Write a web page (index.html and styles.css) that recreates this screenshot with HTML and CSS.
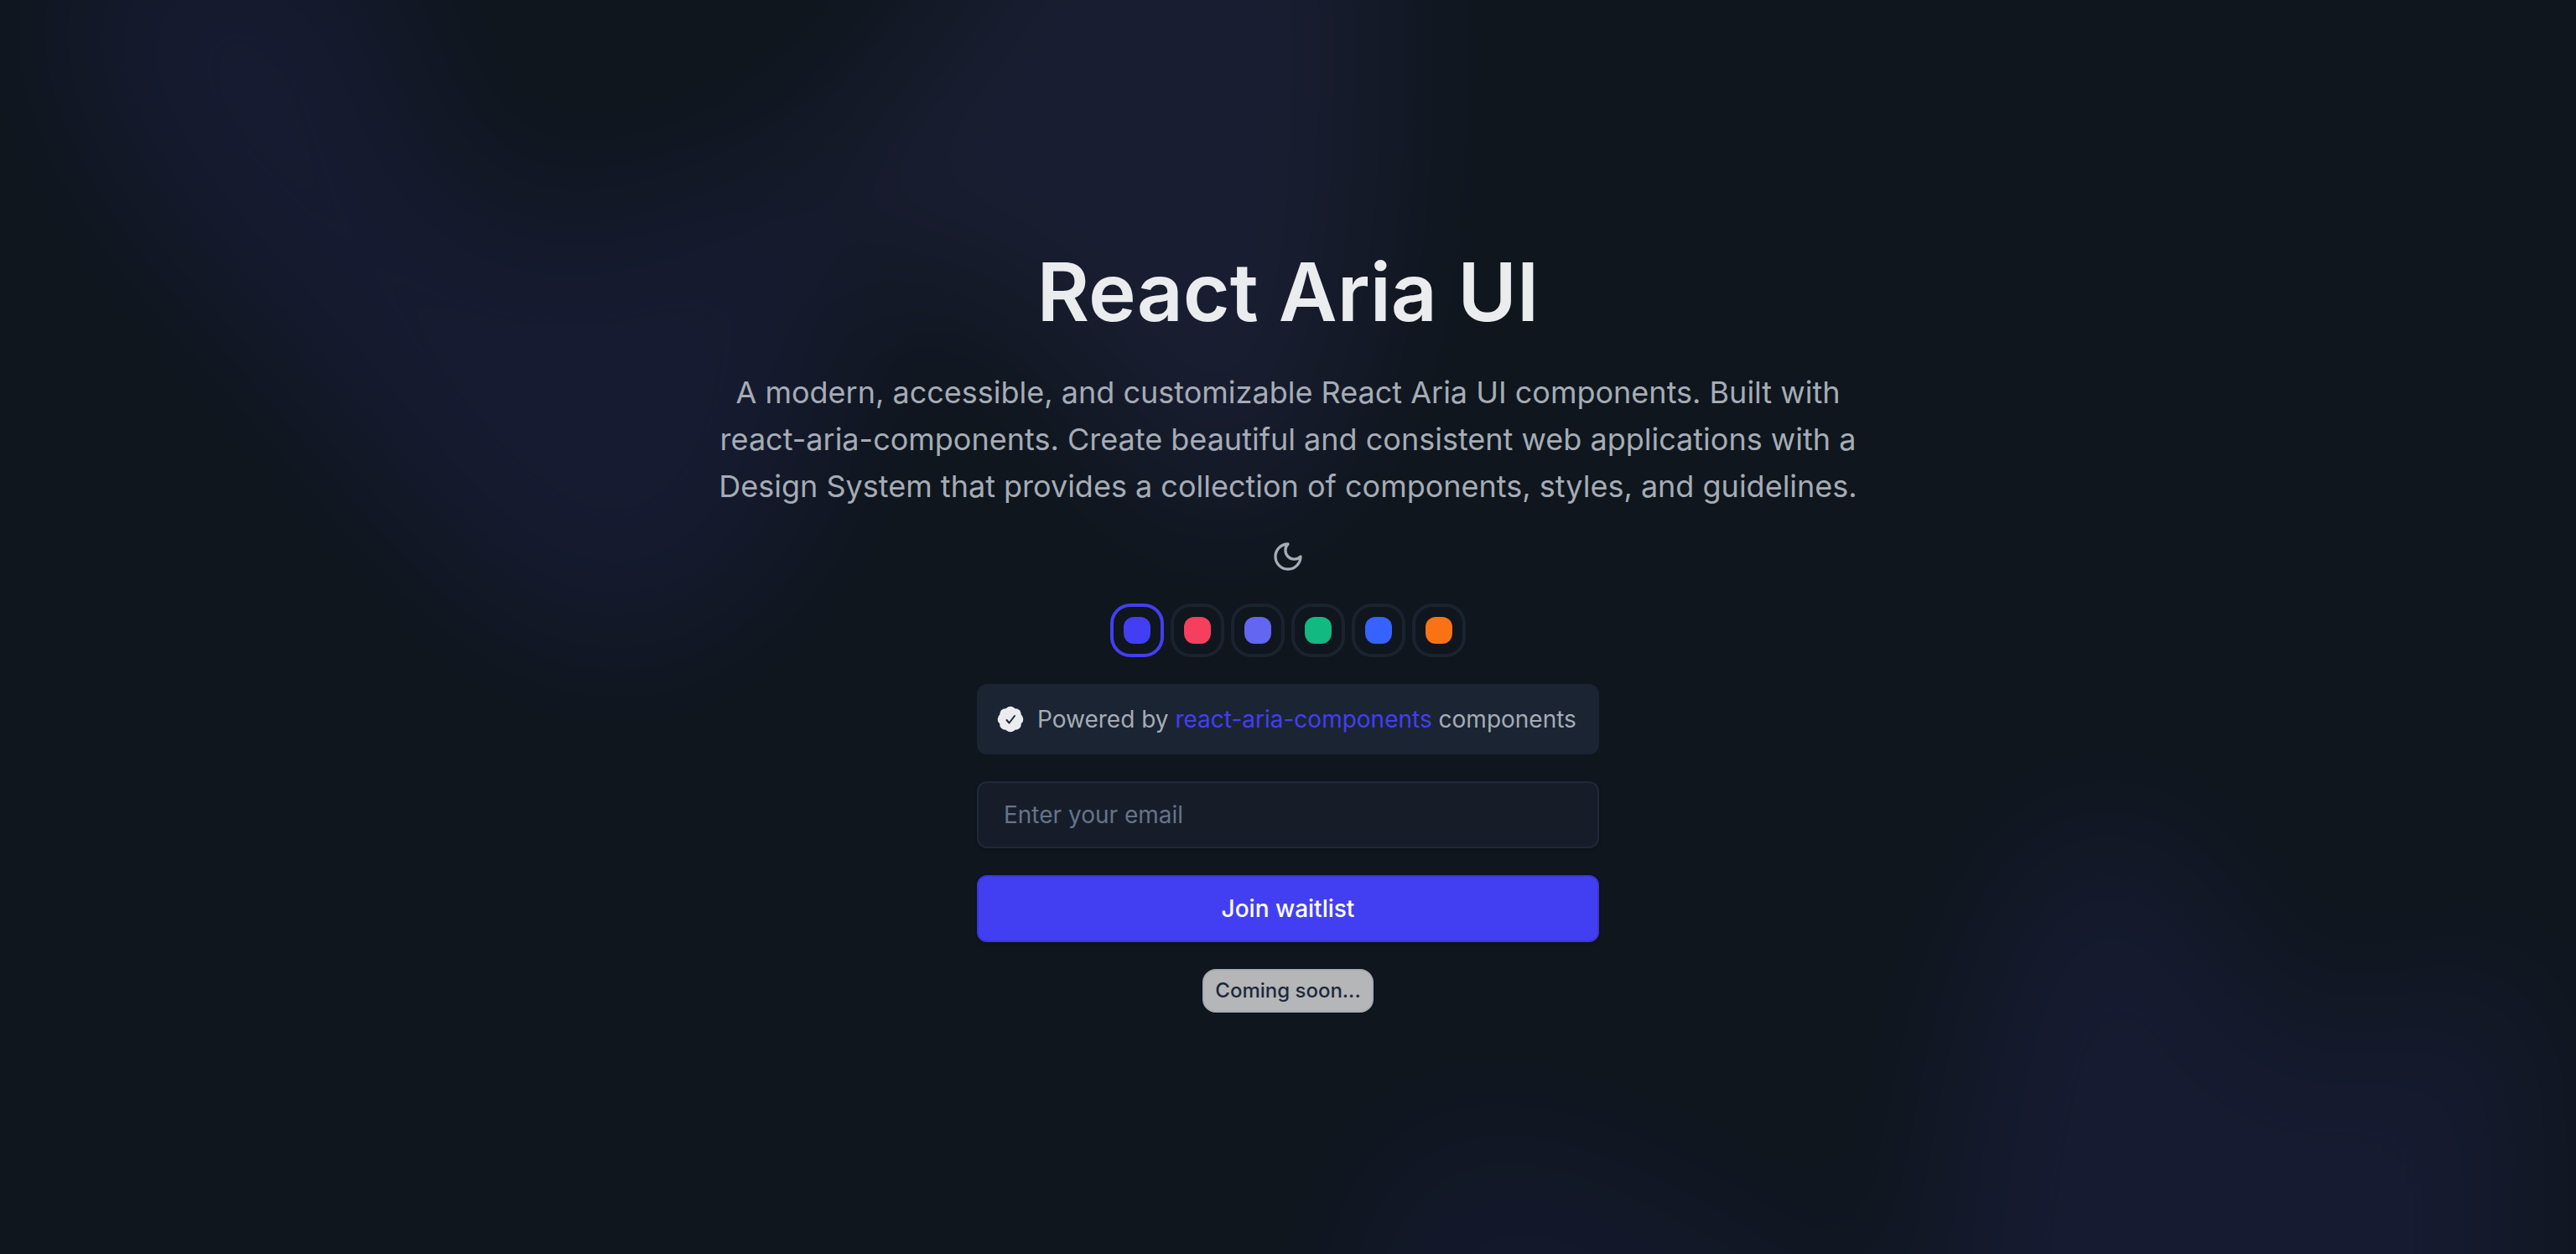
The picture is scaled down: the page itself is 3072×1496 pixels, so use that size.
FILE: index.html
```html
<!DOCTYPE html>
<html lang="en">
<head>
  <meta charset="utf-8">
  <meta name="viewport" content="width=device-width, initial-scale=1">
  <title>React Aria UI</title>
  <link rel="stylesheet" href="styles.css">
</head>
<body>
  <svg class="backdrop" viewBox="0 0 3072 1496" preserveAspectRatio="xMidYMid slice" aria-hidden="true">
    <defs>
      <filter id="soft" filterUnits="userSpaceOnUse" x="-600" y="-600" width="4272" height="2696" color-interpolation-filters="sRGB">
        <feGaussianBlur stdDeviation="90"/>
      </filter>
    </defs>
    <g class="glow">
      <g filter="url(#soft)">
        <path class="blob" d="M90 -60 C200 -140 400 -120 460 -20 C480 180 560 330 760 250 C880 200 900 200 1000 200 L990 480 C960 640 860 770 720 770 C560 730 460 560 340 420 C220 300 60 140 90 -60Z"/>
        <path class="blob-warm" d="M1240 -200 L1640 -200 C1660 160 1650 400 1570 540 C1500 660 1400 640 1300 470 C1220 340 1080 290 960 320 C900 180 1120 80 1240 -200Z"/>
        <path class="blob" d="M2300 1800 C2300 1350 2380 980 2510 980 C2650 990 2660 1270 2780 1250 C2860 1230 2920 1160 3010 1150 L3010 1800Z"/>
        <path class="blob-faint" d="M1620 1800 C1600 1440 1640 1350 1760 1350 C1900 1360 1980 1430 2120 1490 L2400 1800Z"/>
      </g>
    </g>
  </svg>

  <main class="hero">
    <h1 class="title">React Aria UI</h1>
    <p class="lead">A modern, accessible, and customizable React Aria UI components. Built with react-aria-components. Create beautiful and consistent web applications with a Design System that provides a collection of components, styles, and guidelines.</p>

    <button class="theme-toggle" type="button" aria-label="Toggle theme">
      <svg class="moon" viewBox="0 0 24 24" aria-hidden="true">
        <path d="M12 3a6 6 0 0 0 9 9 9 9 0 1 1-9-9Z"/>
      </svg>
    </button>

    <div class="swatches" role="radiogroup" aria-label="Accent color">
      <label class="swatch indigo"><input type="radio" name="accent" aria-label="Indigo" checked></label>
      <label class="swatch rose"><input type="radio" name="accent" aria-label="Rose"></label>
      <label class="swatch violet"><input type="radio" name="accent" aria-label="Violet"></label>
      <label class="swatch emerald"><input type="radio" name="accent" aria-label="Emerald"></label>
      <label class="swatch blue"><input type="radio" name="accent" aria-label="Blue"></label>
      <label class="swatch orange"><input type="radio" name="accent" aria-label="Orange"></label>
    </div>

    <form class="waitlist">
      <div class="notice">
        <svg class="badge-check" viewBox="0 0 32 32" aria-hidden="true">
          <g class="seal">
            <circle cx="16" cy="16" r="13"/>
            <circle cx="16" cy="7.500" r="6.800"/>
            <circle cx="22" cy="10" r="6.800"/>
            <circle cx="24.500" cy="16" r="6.800"/>
            <circle cx="22" cy="22" r="6.800"/>
            <circle cx="16" cy="24.500" r="6.800"/>
            <circle cx="10" cy="22" r="6.800"/>
            <circle cx="7.500" cy="16" r="6.800"/>
            <circle cx="10" cy="10" r="6.800"/>
          </g>
          <path class="tick" d="M11.500 17 14.500 20.500 21 12"/>
        </svg>
        <span>Powered by <a class="link" href="#">react-aria-components</a> components</span>
      </div>
      <input class="field" type="email" placeholder="Enter your email" aria-label="Email">
      <button class="submit" type="submit">Join waitlist</button>
    </form>

    <span class="soon">Coming soon...</span>
  </main>
</body>
</html>
```

FILE: styles.css
```css
:root {
  --bg: #0f161d;
  --surface: #1b2432;
  --text: #ebecee;
  --muted: #a5acb6;
  --accent: #423ff3;
}

* {
  box-sizing: border-box;
}

body {
  margin: 0;
  background: var(--bg);
  color: var(--muted);
  font-family: Inter, "Noto Sans", sans-serif;
  font-size: 28px;
  line-height: 44px;
}

.backdrop {
  position: absolute;
  inset: 0;
  z-index: -1;
  width: 100%;
  height: 100%;
}

.glow {
  opacity: 0.1;
}

.blob {
  fill: #5648e5;
}

.blob-warm {
  fill: #7560e5;
}

.blob-faint {
  fill: #3a36b4;
}

.hero {
  display: flex;
  flex-direction: column;
  align-items: center;
  justify-content: center;
  gap: 32px;
  min-height: 100vh;
  padding: 32px;
}

.title {
  margin: 0;
  color: var(--text);
  font-size: 96px;
  font-weight: 600;
  line-height: 120px;
  text-align: center;
}

.lead {
  max-width: 1400px;
  margin: 0;
  font-size: 36px;
  line-height: 56px;
  text-align: center;
}

.theme-toggle {
  display: grid;
  place-items: center;
  width: 48px;
  height: 48px;
  padding: 0;
  border: 0;
  background: none;
  color: var(--muted);
}

.moon {
  width: 40px;
  height: 40px;
  fill: none;
  stroke: currentColor;
  stroke-width: 2;
  stroke-linecap: round;
  stroke-linejoin: round;
}

.swatches {
  display: flex;
  gap: 8px;
}

.swatch {
  display: grid;
  place-items: center;
  width: 64px;
  height: 64px;
  border: 4px solid #1a2330;
  border-radius: 24px;
}

.swatch:has(:checked) {
  border-color: var(--accent);
}

.swatch input {
  appearance: none;
  width: 32px;
  height: 32px;
  margin: 0;
  border-radius: 12px;
  background: var(--swatch);
}

.indigo { --swatch: #423ff3; }
.rose { --swatch: #f63f5e; }
.violet { --swatch: #6366f1; }
.emerald { --swatch: #12b981; }
.blue { --swatch: #3662ff; }
.orange { --swatch: #f97316; }

.waitlist {
  display: grid;
  gap: 32px;
  min-width: 742px;
}

.notice {
  display: flex;
  align-items: center;
  gap: 16px;
  padding: 20px 24px;
  border-radius: 12px;
  background: var(--surface);
}

.badge-check {
  flex: none;
  width: 32px;
  height: 32px;
}

.seal {
  fill: var(--text);
}

.tick {
  fill: none;
  stroke: var(--surface);
  stroke-width: 2;
  stroke-linecap: round;
  stroke-linejoin: round;
}

.link {
  color: var(--accent);
  text-decoration: none;
}

.field,
.submit {
  width: 100%;
  height: 80px;
  padding: 0 30px;
  border: 2px solid #1e293a;
  border-radius: 12px;
  box-shadow: 0 2px 4px rgb(0 0 0 / 20%);
  font: inherit;
}

.field {
  background: #161d28;
  color: var(--text);
}

.field::placeholder {
  color: #64748b;
  opacity: 1;
}

.submit {
  border-color: #3a37d6;
  background: var(--accent);
  color: #fff;
  font-weight: 500;
}

.soon {
  padding: 4px 13px;
  border: 2px solid #a8adb3;
  border-radius: 16px;
  background: #b4b6b8;
  color: #1e293b;
  font-size: 24px;
  font-weight: 500;
  line-height: 40px;
}
```
